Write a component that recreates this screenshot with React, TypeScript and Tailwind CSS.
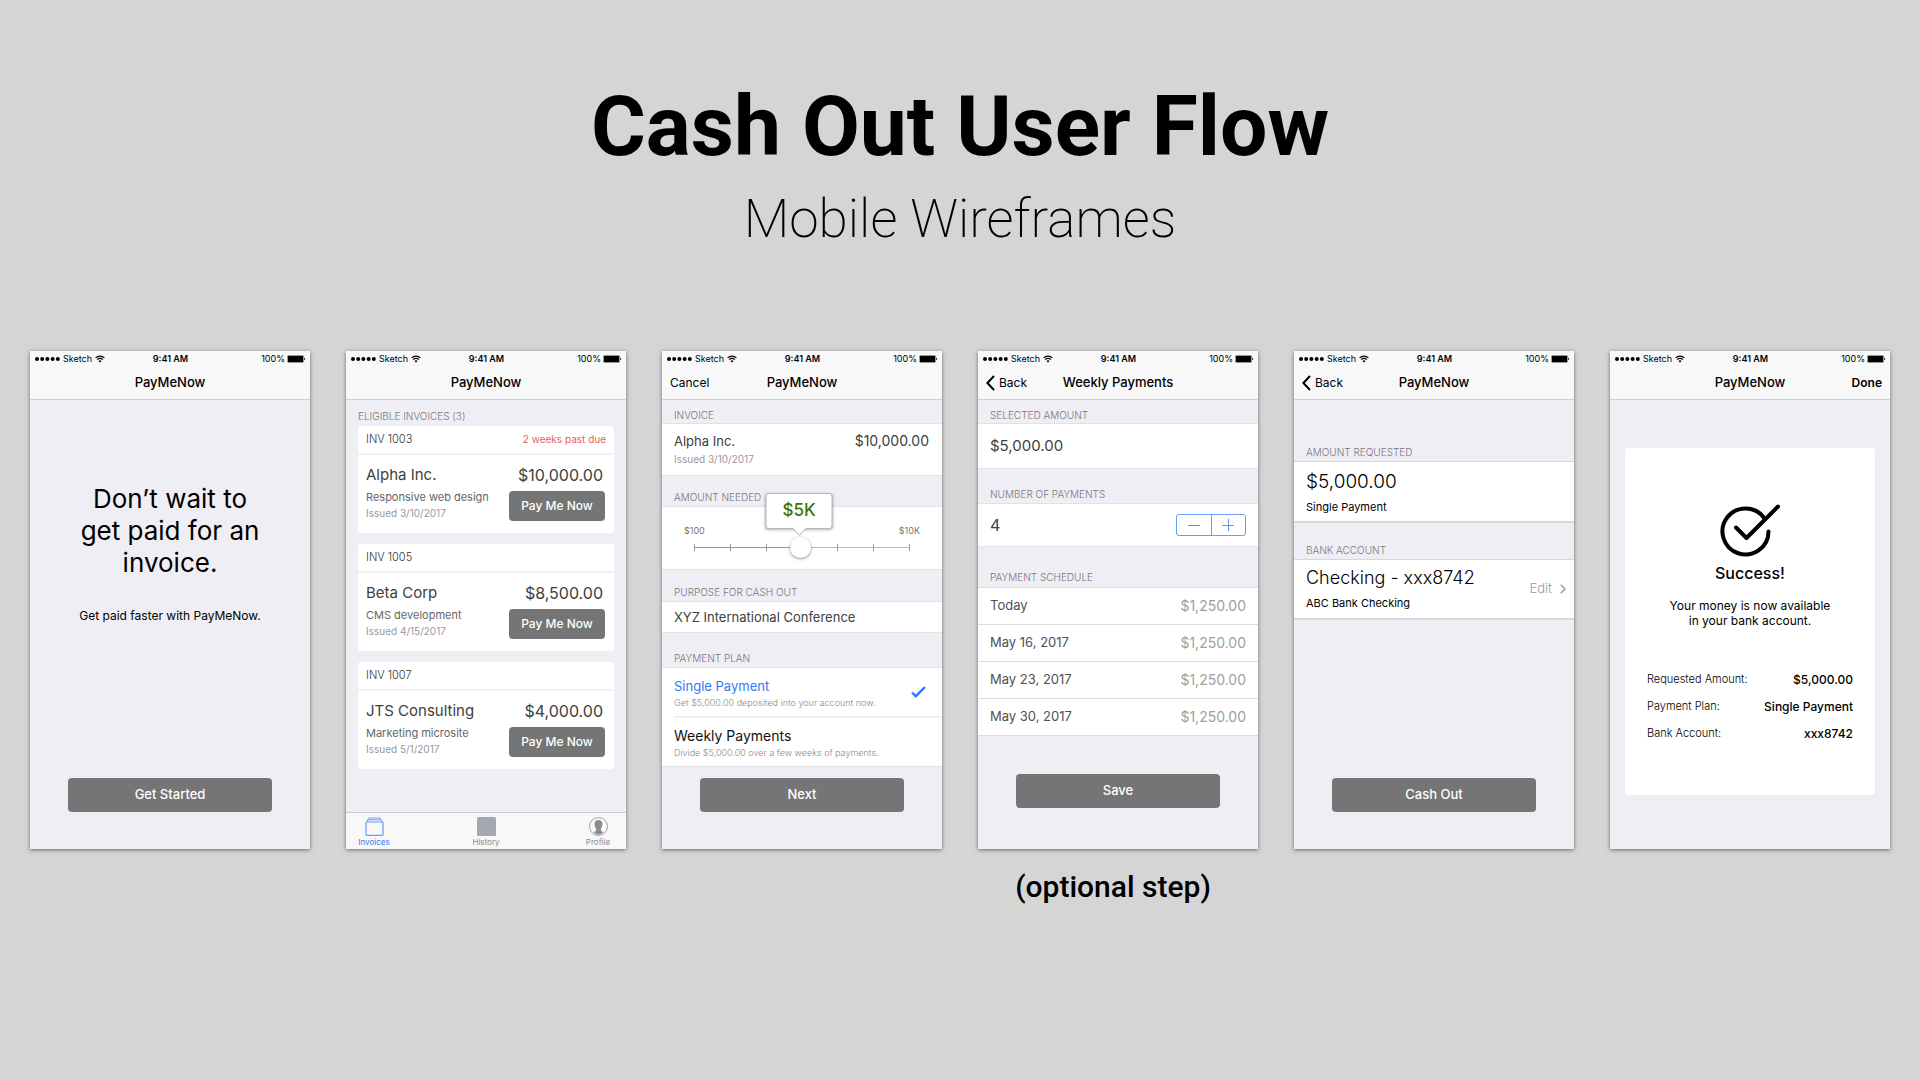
import type { ReactNode } from "react";

const invoices = [
  {
    id: "INV 1003",
    client: "Alpha Inc.",
    amount: "$10,000.00",
    project: "Responsive web design",
    issued: "Issued 3/10/2017",
    due: "2 weeks past due",
  },
  {
    id: "INV 1005",
    client: "Beta Corp",
    amount: "$8,500.00",
    project: "CMS development",
    issued: "Issued 4/15/2017",
  },
  {
    id: "INV 1007",
    client: "JTS Consulting",
    amount: "$4,000.00",
    project: "Marketing microsite",
    issued: "Issued 5/1/2017",
  },
];

const schedule = ["Today", "May 16, 2017", "May 23, 2017", "May 30, 2017"];

const summary = [
  { label: "Requested Amount:", value: "$5,000.00" },
  { label: "Payment Plan:", value: "Single Payment" },
  { label: "Bank Account:", value: "xxx8742" },
];

const StatusBar = () => (
  <div className="grid h-4 grid-cols-3 items-center pr-1 pl-[5px] text-[9px] leading-4">
    <div className="flex items-center gap-[3px]">
      <svg width="25" height="4" viewBox="0 0 25 4">
        {[2, 7.2, 12.4, 17.6, 22.8].map((cx) => (
          <circle key={cx} cx={cx} cy="2" r="2" />
        ))}
      </svg>
      <span>Sketch</span>
      <svg
        width="10"
        height="8"
        viewBox="0 0 10 8"
        fill="none"
        stroke="#000"
        strokeWidth="1.2"
      >
        <path d="M0.6 2.9a6.2 6.2 0 0 1 8.8 0" />
        <path d="M2.2 4.6a3.9 3.9 0 0 1 5.6 0" />
        <path d="M5 7.6 3.5 5.9a2.2 2.2 0 0 1 3 0z" fill="#000" stroke="none" />
      </svg>
    </div>
    <span className="text-center font-semibold">9:41 AM</span>
    <div className="flex items-center justify-end gap-0.5">
      <span>100%</span>
      <svg width="19" height="8" viewBox="0 0 19 8">
        <rect x="0.3" y="0.3" width="16.4" height="7.4" rx="1" fill="#777" />
        <rect x="1" y="1" width="15" height="6" rx="0.5" />
        <path d="M17.3 2.6a1.5 1.5 0 0 1 0 2.8z" />
      </svg>
    </div>
  </div>
);

type ScreenProps = {
  title?: string;
  left?: ReactNode;
  right?: ReactNode;
  caption?: string;
  children: ReactNode;
};

const Screen = ({
  title = "PayMeNow",
  left,
  right,
  caption,
  children,
}: ScreenProps) => (
  <div>
    <section className="flex min-h-[498px] flex-col bg-[#efeef4] shadow-[0_1px_4px_rgba(0,0,0,0.5)]">
      <header className="border-b border-[#cfced6] bg-[#f8f8f8]">
        <StatusBar />
        <div className="grid h-8 grid-cols-[1fr_auto_1fr] items-center px-2">
          <div className="flex">{left}</div>
          <h2 className="text-[13px] font-medium">{title}</h2>
          <div className="flex justify-end">{right}</div>
        </div>
      </header>
      {children}
    </section>
    {caption && (
      <p className="mt-5 pr-2.5 text-center font-[Roboto,sans-serif] text-[30px] leading-9 font-medium">
        {caption}
      </p>
    )}
  </div>
);

const BackButton = () => (
  <button className="flex items-center gap-1 text-xs">
    <svg
      width="9"
      height="16"
      viewBox="1 0 9 16"
      fill="none"
      stroke="#000"
      strokeWidth="2"
    >
      <path d="M9 1 2.4 8 9 15" />
    </svg>
    Back
  </button>
);

const PrimaryButton = ({
  className = "mb-[37px]",
  children,
}: {
  className?: string;
  children: ReactNode;
}) => (
  <div className={`mt-auto px-[38px] ${className}`}>
    <button className="h-[34px] w-full rounded bg-[#757575] text-[13px] font-medium text-white">
      {children}
    </button>
  </div>
);

const SectionLabel = ({
  className,
  children,
}: {
  className: string;
  children: ReactNode;
}) => (
  <h3
    className={`px-3 text-[10px] leading-4 font-light text-[#77777c] ${className}`}
  >
    {children}
  </h3>
);

const Welcome = () => (
  <Screen>
    <div className="mt-[83px] text-center">
      <p className="mx-auto w-[196px] text-[26px] leading-8">
        Don’t wait to
        <br />
        get paid for an invoice.
      </p>
      <p className="mt-[29px] text-xs leading-4">
        Get paid faster with PayMeNow.
      </p>
    </div>
    <PrimaryButton>Get Started</PrimaryButton>
  </Screen>
);

const InvoiceList = () => (
  <Screen>
    <SectionLabel className="pt-2 pb-0.5">ELIGIBLE INVOICES (3)</SectionLabel>
    <ul className="flex flex-col gap-[11px] px-3">
      {invoices.map((invoice) => (
        <li key={invoice.id} className="h-[107px] rounded-[3px] bg-white">
          <div className="flex h-[29px] items-center justify-between border-b-2 border-[#f1f1f3] px-2 text-[11px] font-light text-[#333]">
            <span>{invoice.id}</span>
            <span className="text-[10px] font-normal text-[#e9605f]">
              {invoice.due}
            </span>
          </div>
          <div className="flex justify-between pt-2 pr-[9px] pl-2">
            <div className="whitespace-nowrap">
              <h4 className="text-[15px] leading-6 text-[#404040]">
                {invoice.client}
              </h4>
              <p className="mt-0.5 text-[11px] leading-4 text-[#666]">
                {invoice.project}
              </p>
              <p className="text-[10px] leading-4 text-[#999]">
                {invoice.issued}
              </p>
            </div>
            <div className="text-right">
              <p className="pr-0.5 text-base leading-6 text-[#404040]">
                {invoice.amount}
              </p>
              <button className="mt-1 h-[30px] w-24 rounded bg-[#757575] text-xs font-medium text-white">
                Pay Me Now
              </button>
            </div>
          </div>
        </li>
      ))}
    </ul>
    <nav className="mt-auto flex h-[37px] justify-between border-t border-[#ccc] bg-[#f8f8f8] px-2.5 pt-1 text-[8px] leading-[9px] text-[#8a8a8a]">
      <a
        href="#invoices"
        className="flex w-9 flex-col items-center gap-0.5 text-[#3478f6]"
      >
        <svg
          width="19"
          height="19"
          viewBox="0 0 19 19"
          fill="none"
          stroke="#6b9cf8"
        >
          <rect x="1" y="5" width="17" height="13.3" rx="0.5" strokeWidth="1.2" />
          <path d="M2.3 5V2.8h14.4V5M4 2.8V1h11v1.8" />
        </svg>
        Invoices
      </a>
      <a href="#history" className="flex w-9 flex-col items-center gap-0.5">
        <svg width="19" height="19" viewBox="0 0 19 19">
          <rect width="19" height="19" rx="1.5" fill="#a4a8b2" />
        </svg>
        History
      </a>
      <a href="#profile" className="flex w-9 flex-col items-center gap-0.5">
        <svg width="19" height="19" viewBox="0 0 19 19">
          <circle
            cx="9.5"
            cy="9.5"
            r="9"
            fill="none"
            stroke="#8a8a8a"
            strokeWidth="0.8"
          />
          <path
            d="M9.5 3c2.7 0 4 1.7 3.9 4.1 0 1.9-.5 3.3-1.5 4.4v2.1c0 .8 1.3 1 2.6 1.5-1.3 1.4-3 2.3-5 2.3s-3.7-.9-5-2.3c1.3-.5 2.6-.7 2.6-1.5v-2.1C6.1 10.4 5.6 9 5.6 7.1 5.5 4.7 6.8 3 9.5 3z"
            fill="#8a8a8a"
          />
        </svg>
        Profile
      </a>
    </nav>
  </Screen>
);

const AmountSlider = () => (
  <div className="relative border-y border-[#e2e1e6] bg-white px-8 pt-[18px] pb-3">
    <div className="-mx-2.5 flex justify-between text-[9px] leading-3 text-[#777]">
      <span>$100</span>
      <span>$10K</span>
    </div>
    <div className="grid h-5 items-center">
      <div className="col-start-1 row-start-1 flex h-px">
        <div className="w-1/2 bg-[#6b9cf8]" />
        <div className="w-1/2 bg-[#b9b9be]" />
      </div>
      <div className="col-start-1 row-start-1 flex justify-between">
        {[0, 1, 2, 3, 4, 5, 6].map((tick) => (
          <span key={tick} className="h-[7px] w-px bg-[#999]" />
        ))}
      </div>
      <input
        type="range"
        min="0"
        max="6"
        defaultValue="3"
        aria-label="Amount needed"
        className="z-10 col-start-1 row-start-1 -mr-2 -ml-3 h-5 appearance-none bg-transparent [&::-webkit-slider-thumb]:size-[21px] [&::-webkit-slider-thumb]:appearance-none [&::-webkit-slider-thumb]:rounded-full [&::-webkit-slider-thumb]:bg-white [&::-webkit-slider-thumb]:shadow-[0_1px_3px_rgba(0,0,0,0.45)]"
      />
    </div>
    {/* value bubble over the thumb */}
    <output className="absolute -top-3.5 left-[49%] flex -translate-x-1/2 flex-col items-center text-[17px] font-medium text-[#417505]">
      <span className="flex h-9 w-[67px] items-center justify-center rounded-[3px] border border-[#b5b5b5] bg-white shadow-[0_1px_3px_rgba(0,0,0,0.3)]">
        $5K
      </span>
      <svg width="14" height="8" viewBox="0 0 14 8" className="-mt-px">
        <path d="M0 0h14L7 7.5z" fill="#fff" />
        <path d="M0.5 0.5 7 7.3 13.5 0.5" fill="none" stroke="#aaa" />
      </svg>
    </output>
  </div>
);

const CashOutForm = () => (
  <Screen left={<button className="text-xs">Cancel</button>}>
    <SectionLabel className="pt-[7px]">INVOICE</SectionLabel>
    <div className="flex h-[53px] justify-between border-y border-[#e2e1e6] bg-white pt-[7px] pr-[13px] pl-3">
      <div>
        <p className="text-[13px] leading-5 text-[#404040]">Alpha Inc.</p>
        <p className="text-[10px] leading-4 text-[#999]">Issued 3/10/2017</p>
      </div>
      <p className="text-sm leading-5 text-[#404040]">$10,000.00</p>
    </div>
    <SectionLabel className="pt-[13px] pb-px">AMOUNT NEEDED</SectionLabel>
    <AmountSlider />
    <SectionLabel className="pt-3.5 pb-px">
      <label htmlFor="purpose">PURPOSE FOR CASH OUT</label>
    </SectionLabel>
    <input
      id="purpose"
      type="text"
      defaultValue="XYZ International Conference"
      className="h-8 w-full border-y border-[#e2e1e6] bg-white px-3 text-[13px] text-[#404040]"
    />
    <SectionLabel className="pt-[17px] pb-px">PAYMENT PLAN</SectionLabel>
    <div className="border-y border-[#e2e1e6] bg-white pl-3">
      <label className="flex h-[50px] items-center justify-between border-b-2 border-[#f1f1f3] pt-1 pr-4">
        <input
          type="radio"
          name="plan"
          value="single"
          defaultChecked
          className="sr-only"
        />
        <span>
          <span className="block text-[13px] leading-[18px] text-[#3478f6]">
            Single Payment
          </span>
          <span className="block text-[9px] leading-4 font-light text-[#888]">
            Get $5,000.00 deposited into your account now.
          </span>
        </span>
        <svg
          width="15"
          height="12"
          viewBox="0 0 15 12"
          fill="none"
          stroke="#3478f6"
          strokeWidth="2.4"
          className="mb-1"
        >
          <path d="M1 6.5 4.8 10.2 14 1" />
        </svg>
      </label>
      <label className="flex h-12 items-center pt-1">
        <input type="radio" name="plan" value="weekly" className="sr-only" />
        <span>
          <span className="block text-sm leading-[18px] text-[#111]">
            Weekly Payments
          </span>
          <span className="block text-[9px] leading-4 font-light text-[#888]">
            Divide $5,000.00 over a few weeks of payments.
          </span>
        </span>
      </label>
    </div>
    <PrimaryButton>Next</PrimaryButton>
  </Screen>
);

const WeeklyPayments = () => (
  <Screen
    title="Weekly Payments"
    left={<BackButton />}
    caption="(optional step)"
  >
    <SectionLabel className="pt-[7px]">SELECTED AMOUNT</SectionLabel>
    <p className="flex h-[46px] items-center border-y border-[#e2e1e6] bg-white px-3 text-[15px] text-[#404040]">
      $5,000.00
    </p>
    <SectionLabel className="pt-[17px] pb-px">NUMBER OF PAYMENTS</SectionLabel>
    <div className="flex h-11 items-center justify-between border-y border-[#e2e1e6] bg-white px-3">
      <span className="text-base text-[#404040]">4</span>
      <div className="flex h-[22px] w-[70px] rounded-[3px] border border-[#6b9cf8]">
        <button
          aria-label="Fewer payments"
          className="flex flex-1 items-center justify-center border-r border-[#6b9cf8]"
        >
          <svg width="12" height="12" viewBox="0 0 12 12" stroke="#5b92f8">
            <path d="M0 6.5h12" />
          </svg>
        </button>
        <button
          aria-label="More payments"
          className="flex flex-1 items-center justify-center"
        >
          <svg width="12" height="12" viewBox="0 0 12 12" stroke="#5b92f8">
            <path d="M0 6.5h12M6.5 0v12" />
          </svg>
        </button>
      </div>
    </div>
    <SectionLabel className="pt-[22px] pb-0.5">PAYMENT SCHEDULE</SectionLabel>
    <table className="w-full bg-white text-[13px]">
      <tbody>
        {schedule.map((date) => (
          <tr key={date} className="h-[37px] border-y border-[#dddde0]">
            <th
              scope="row"
              className="pl-3 text-left font-normal text-[#505050]"
            >
              {date}
            </th>
            <td className="pr-3 text-right text-sm text-[#a0a0a0]">
              $1,250.00
            </td>
          </tr>
        ))}
      </tbody>
    </table>
    <PrimaryButton className="mb-[41px]">Save</PrimaryButton>
  </Screen>
);

const Review = () => (
  <Screen left={<BackButton />}>
    <SectionLabel className="pt-11 pb-px">AMOUNT REQUESTED</SectionLabel>
    <div className="h-[62px] border-t border-b-2 border-[#d8d7dc] bg-white px-3 pt-1.5">
      <p className="text-[19px] leading-7 font-light">$5,000.00</p>
      <p className="text-[11px] leading-[22px]">Single Payment</p>
    </div>
    <SectionLabel className="pt-[19px] pb-px">BANK ACCOUNT</SectionLabel>
    <div className="flex h-[61px] items-center justify-between border-t border-b-2 border-[#d8d7dc] bg-white pr-2 pl-3">
      <div>
        <p className="text-lg leading-7 font-light">Checking - xxx8742</p>
        <p className="text-[11px] leading-[22px]">ABC Bank Checking</p>
      </div>
      <button className="flex items-center gap-2 text-[13px] font-light text-[#999]">
        Edit
        <svg
          width="6"
          height="10"
          viewBox="0 0 6 10"
          fill="none"
          stroke="#999"
          strokeWidth="1.5"
        >
          <path d="M0.8 0.8 5 5 0.8 9.2" />
        </svg>
      </button>
    </div>
    <PrimaryButton>Cash Out</PrimaryButton>
  </Screen>
);

const Success = () => (
  <Screen right={<button className="text-xs font-semibold">Done</button>}>
    <div className="mx-[15px] mt-12 flex h-[347px] flex-col items-center rounded bg-white px-[22px] pt-14">
      <svg
        width="60"
        height="54"
        viewBox="0 0 60 54"
        fill="none"
        stroke="#000"
        strokeWidth="4"
        strokeLinecap="round"
      >
        <path d="M44.5 14.5A23 23 0 1 0 48.5 27.5" />
        <path d="M16 23.5 26.500 34 58 2.5" strokeLinejoin="round" />
      </svg>
      <h3 className="mt-[3px] text-base leading-6 font-medium">Success!</h3>
      <p className="mt-[13px] text-center text-xs leading-[15px]">
        Your money is now available
        <br />
        in your bank account.
      </p>
      <dl className="mt-[38px] w-full">
        {summary.map((row) => (
          <div
            key={row.label}
            className="flex h-[27px] items-center justify-between"
          >
            <dt className="text-[11px] font-light">{row.label}</dt>
            <dd className="text-xs font-medium">{row.value}</dd>
          </div>
        ))}
      </dl>
    </div>
  </Screen>
);

const App = () => {
  return (
    <main className="min-h-screen bg-[#d5d5d5] px-[30px] pt-[79px] pb-12 font-[Inter,sans-serif] text-black">
      <header className="text-center font-[Roboto,sans-serif]">
        <h1 className="text-[84px] leading-[96px] font-bold">
          Cash Out User Flow
        </h1>
        <p className="mt-2 text-[53px] leading-[72px] font-extralight">
          Mobile Wireframes
        </p>
      </header>
      <div className="mt-24 grid grid-cols-[repeat(auto-fit,minmax(270px,1fr))] gap-9">
        <Welcome />
        <InvoiceList />
        <CashOutForm />
        <WeeklyPayments />
        <Review />
        <Success />
      </div>
    </main>
  );
};

export default App;
